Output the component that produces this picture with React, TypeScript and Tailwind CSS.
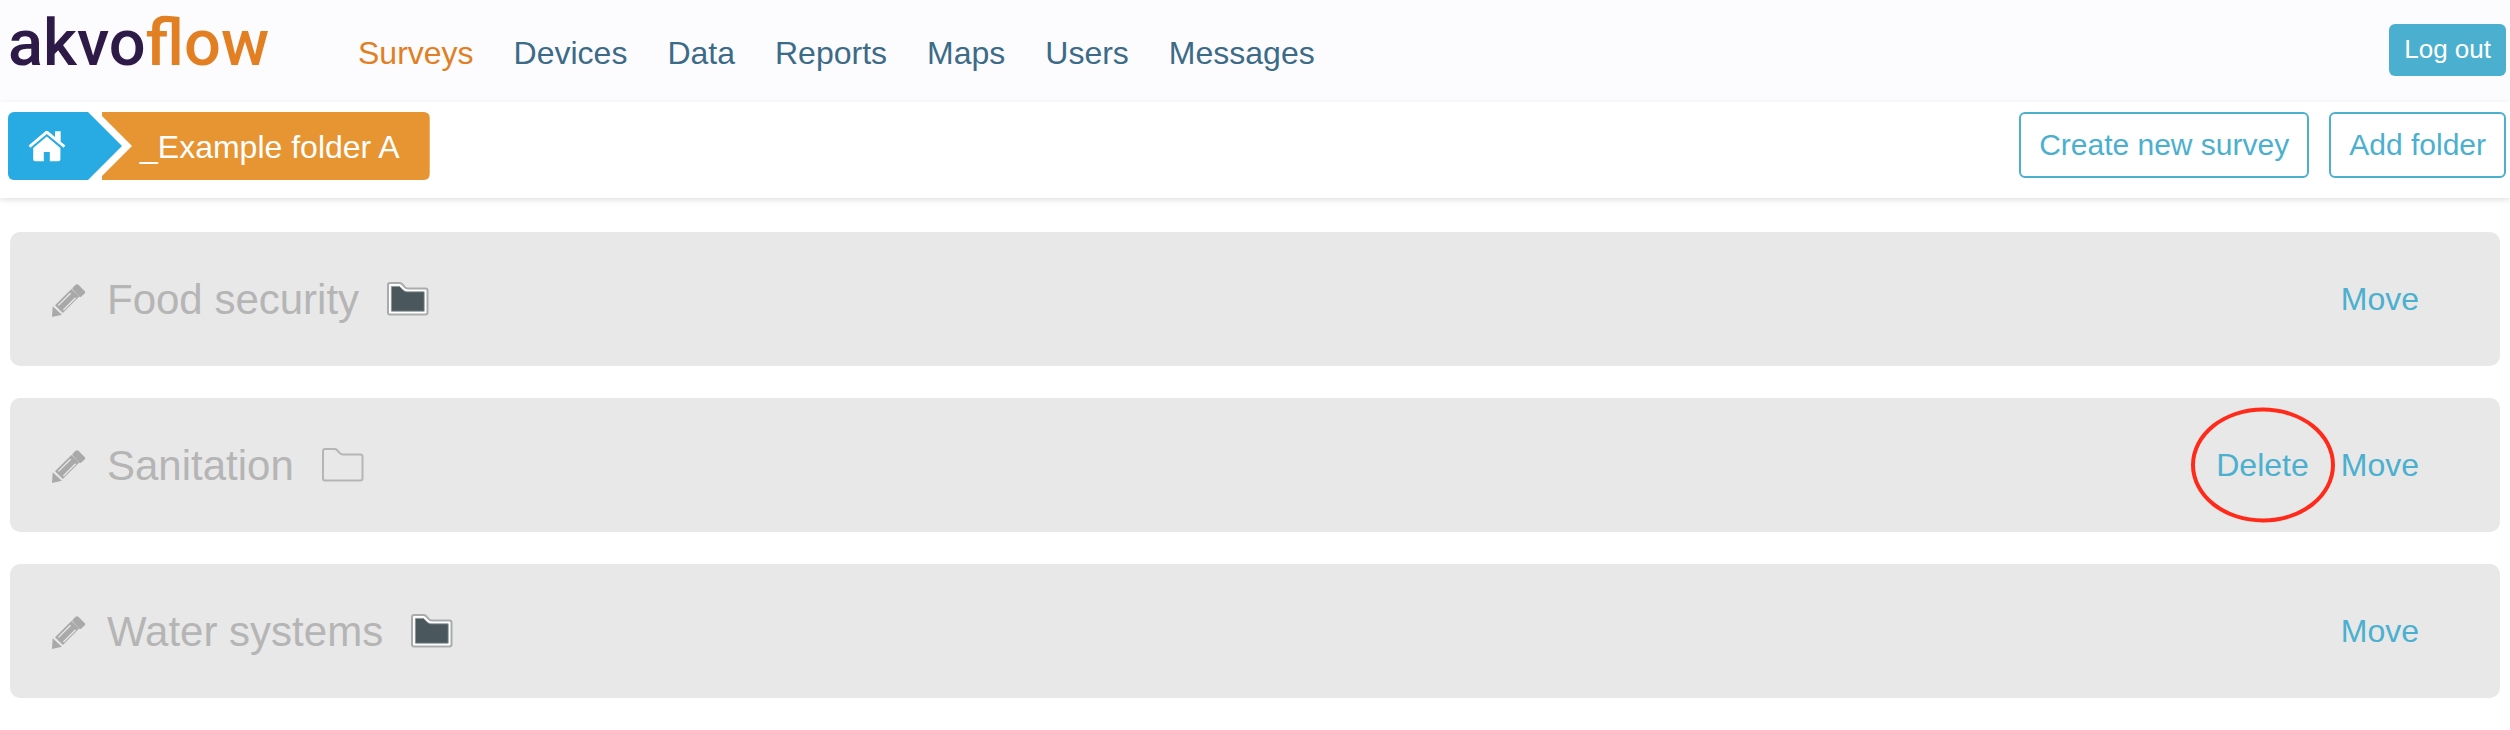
const navItems = ["Surveys", "Devices", "Data", "Reports", "Maps", "Users", "Messages"];

const folders = [
  { name: "Food security", filled: true, canDelete: false },
  { name: "Sanitation", filled: false, canDelete: true },
  { name: "Water systems", filled: true, canDelete: false },
];

function HomeIcon() {
  return (
    <svg width="38" height="32" viewBox="0 0 38 32" fill="white" aria-hidden="true">
      <path d="M0.6 15.6 L17.2 1.4 Q18.8 0.2 20.4 1.4 L27 7 V1.2 H32.7 V11.8 L37.4 15.6 L35.6 17.8 L18.8 4 L2.4 17.8 Z" />
      <path d="M18.8 6.6 L32.4 18 V29.4 Q32.4 31.2 30.6 31.2 H21.8 V22 H15.8 V31.2 H7 Q5.2 31.2 5.2 29.4 V18 Z" />
    </svg>
  );
}

function PencilIcon() {
  return (
    <svg width="34" height="34" viewBox="0 0 34 34" fill="#a9a9a9" aria-hidden="true">
      <path d="M0 33 L0.7 22.2 L9.9 30.8 Z" />
      <path d="M3 21.2 L19.4 5 L27.2 12.6 L10.8 29 Z" />
      <path d="M6.4 21.4 L18.6 9.2 M11.4 26 L23.6 13.8" stroke="#e8e8e8" strokeWidth="1.3" />
      <path d="M20.4 4 L23.6 0.8 Q25 -0.4 26.4 0.8 L32.6 7 Q33.8 8.2 32.6 9.6 L28.8 13 Q27.8 13.4 27 12.2 L21 6 Q20 5 20.4 4 Z" />
    </svg>
  );
}

function FolderIcon({ filled }: { filled: boolean }) {
  return (
    <svg width="42" height="34" viewBox="0 0 42 34" fill="none" aria-hidden="true">
      <path
        d="M3 1 H12.5 Q14 1 15.2 2.2 L17.6 4.8 Q19 6.4 21 6.4 H38.5 Q40.5 6.4 40.5 8.4 V30.5 Q40.5 32.5 38.5 32.5 H3 Q1 32.5 1 30.5 V3 Q1 1 3 1 Z"
        fill={filled ? "white" : "none"}
        stroke={filled ? "#a9abad" : "#b5b5b5"}
        strokeWidth="2"
      />
      {filled && (
        <path
          d="M4.4 4.4 H12.6 L15.8 7.8 Q17.8 9.8 20 9.8 H37.2 V29.2 H4.4 Z"
          fill="#4a575c"
          stroke="#8c9497"
          strokeWidth="0.8"
        />
      )}
    </svg>
  );
}

function Header() {
  return (
    <header className="flex h-[102px] items-start justify-between bg-[#fcfcff] pr-1 pl-2">
      <div className="flex items-start">
        <a
          href="#"
          className="w-[350px] pt-[5px] font-[Roboto] text-[65px] leading-[76px] font-medium text-[#2e1a47]"
        >
          akvo<span className="text-[#e27f22]">flow</span>
        </a>
        <nav className="flex gap-10 pt-[33px] text-[32px] leading-10">
          {navItems.map((item, i) => (
            <a key={item} href="#" className={i === 0 ? "text-[#e27f22]" : "text-[#3c6b88]"}>
              {item}
            </a>
          ))}
        </nav>
      </div>
      <button className="mt-6 h-[52px] rounded-md bg-[#4bb0cf] px-[15px] pb-[2px] text-[26px] leading-8 text-white">
        Log out
      </button>
    </header>
  );
}

function Breadcrumbs() {
  return (
    <nav aria-label="Breadcrumb" className="flex h-[68px] text-[32px] leading-[68px] text-white">
      <a
        href="#"
        aria-label="Home"
        className="z-10 flex w-[114px] items-center rounded-l-md bg-[#28aae2] pl-5 [clip-path:polygon(0_0,80px_0,100%_50%,80px_100%,0_100%)]"
      >
        <HomeIcon />
      </a>
      <a
        href="#"
        className="-ml-5 rounded-r-md bg-[#e79533] pt-[2px] pr-[30px] pl-[38px] leading-[66px] [clip-path:polygon(0_0,100%_0,100%_100%,0_100%,0_64px,30px_50%,0_4px)]"
      >
        _Example folder A
      </a>
    </nav>
  );
}

export default function App() {
  const outlineButton =
    "h-[66px] rounded-md border-2 border-[#4bb0cf] px-[18px] text-[30px] leading-9 text-[#4bb0cf]";

  return (
    <div className="min-h-screen bg-white font-['Liberation_Sans',Arial,sans-serif]">
      <Header />
      <div className="flex h-24 items-start justify-between pt-[10px] pr-1 pl-2 shadow-[0_2px_6px_rgba(0,0,0,0.12)]">
        <Breadcrumbs />
        <div className="flex gap-5">
          <button className={outlineButton}>Create new survey</button>
          <button className={outlineButton}>Add folder</button>
        </div>
      </div>
      <ul className="flex flex-col gap-8 px-[10px] py-[34px]">
        {folders.map((folder) => (
          <li
            key={folder.name}
            className="flex h-[134px] items-center justify-between rounded-[10px] bg-[#e8e8e8] pr-[81px] pl-[42px]"
          >
            <div className="flex items-center">
              <button aria-label={`Edit ${folder.name}`} className="mt-1 mr-[21px]">
                <PencilIcon />
              </button>
              <a href="#" className="mr-7 pt-[2px] text-[42px] leading-[50px] text-[#b5b5b5]">
                {folder.name}
              </a>
              <FolderIcon filled={folder.filled} />
            </div>
            <div className="flex gap-8 text-[32px] leading-10 text-[#4bb0cf]">
              {folder.canDelete && (
                <button className="relative">
                  Delete
                  <span className="pointer-events-none absolute top-1/2 left-1/2 h-[115px] w-36 -translate-1/2 rounded-[50%] border-4 border-[#ff2a1a]" />
                </button>
              )}
              <button>Move</button>
            </div>
          </li>
        ))}
      </ul>
    </div>
  );
}
